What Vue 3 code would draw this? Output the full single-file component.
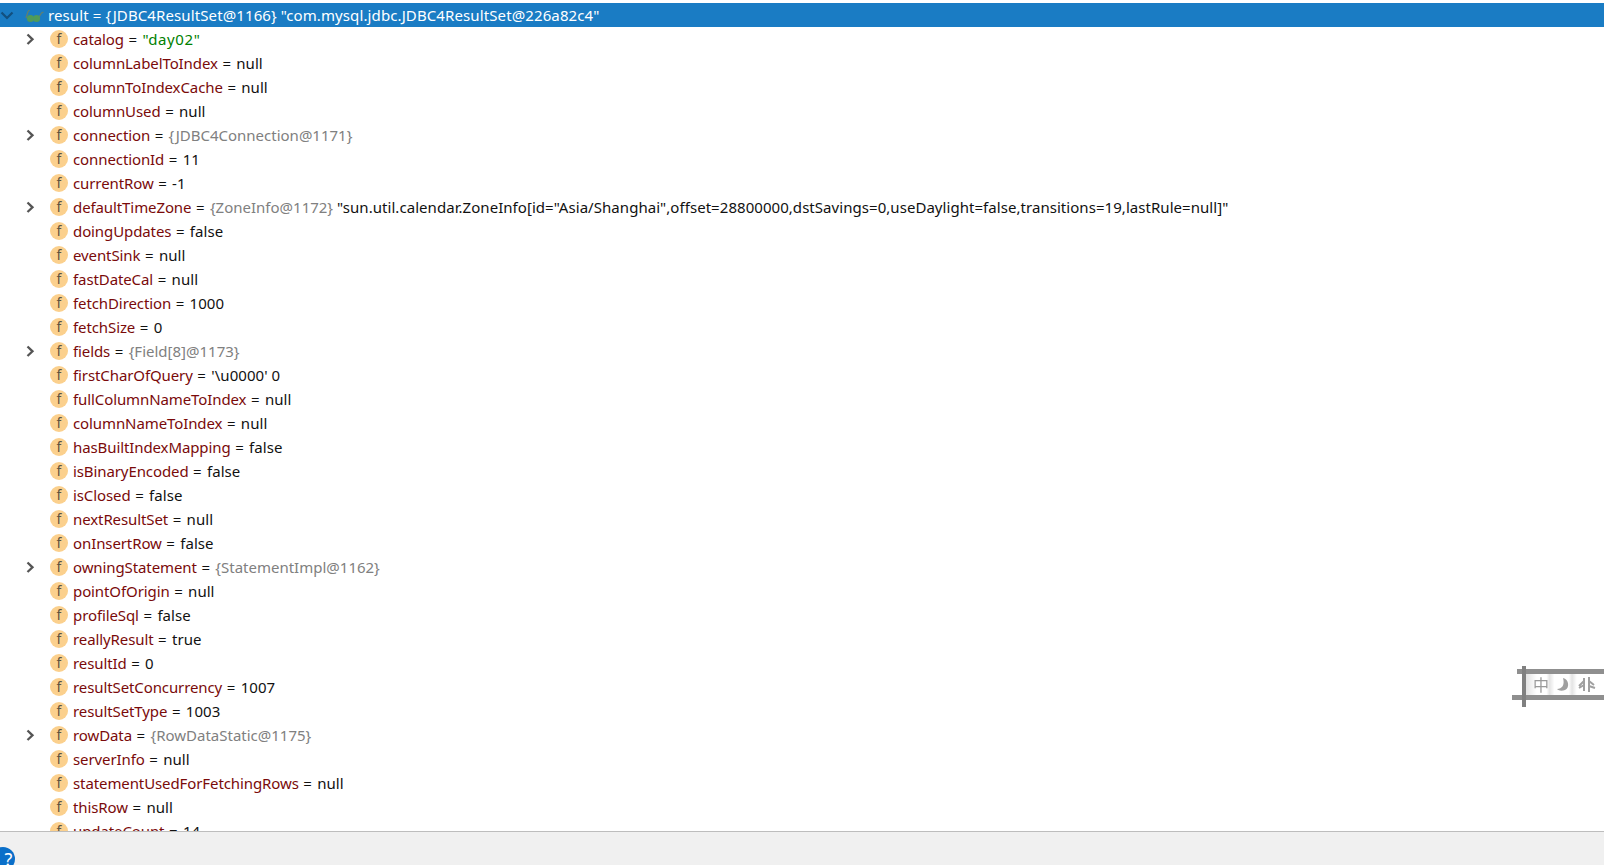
<script setup>
const rows = [
  { n: 'catalog', s: '"day02"', x: 1 },
  { n: 'columnLabelToIndex', v: 'null' },
  { n: 'columnToIndexCache', v: 'null' },
  { n: 'columnUsed', v: 'null' },
  { n: 'connection', r: '{JDBC4Connection@1171}', x: 1 },
  { n: 'connectionId', v: '11' },
  { n: 'currentRow', v: '-1' },
  { n: 'defaultTimeZone', r: '{ZoneInfo@1172}', v: '"sun.util.calendar.ZoneInfo[id="Asia/Shanghai",offset=28800000,dstSavings=0,useDaylight=false,transitions=19,lastRule=null]"', x: 1 },
  { n: 'doingUpdates', v: 'false' },
  { n: 'eventSink', v: 'null' },
  { n: 'fastDateCal', v: 'null' },
  { n: 'fetchDirection', v: '1000' },
  { n: 'fetchSize', v: '0' },
  { n: 'fields', r: '{Field[8]@1173}', x: 1 },
  { n: 'firstCharOfQuery', v: "'\\u0000' 0" },
  { n: 'fullColumnNameToIndex', v: 'null' },
  { n: 'columnNameToIndex', v: 'null' },
  { n: 'hasBuiltIndexMapping', v: 'false' },
  { n: 'isBinaryEncoded', v: 'false' },
  { n: 'isClosed', v: 'false' },
  { n: 'nextResultSet', v: 'null' },
  { n: 'onInsertRow', v: 'false' },
  { n: 'owningStatement', r: '{StatementImpl@1162}', x: 1 },
  { n: 'pointOfOrigin', v: 'null' },
  { n: 'profileSql', v: 'false' },
  { n: 'reallyResult', v: 'true' },
  { n: 'resultId', v: '0' },
  { n: 'resultSetConcurrency', v: '1007' },
  { n: 'resultSetType', v: '1003' },
  { n: 'rowData', r: '{RowDataStatic@1175}', x: 1 },
  { n: 'serverInfo', v: 'null' },
  { n: 'statementUsedForFetchingRows', v: 'null' },
  { n: 'thisRow', v: 'null' },
  { n: 'updateCount', v: '14' },
]
</script>

<template>
  <div class="page">
    <div class="tree">
      <div class="row selected">
        <svg class="down" width="14" height="14" viewBox="0 0 14 14">
          <path d="M1.5 4.5 L7 10 L12.5 4.5" fill="none" stroke="#12507f" stroke-width="2.2" />
        </svg>
        <svg class="glasses" width="20" height="18" viewBox="0 0 20 18">
          <path d="M2 12 L4 5.5 L5.5 4 M15 11 L17.5 7 L19.5 6" fill="none" stroke="#62806f" stroke-width="1.3" />
          <circle cx="6.5" cy="12.5" r="3.6" fill="#4f9a5a" />
          <circle cx="12.5" cy="12.5" r="3.6" fill="#4f9a5a" />
        </svg>
        <span class="title">result = {JDBC4ResultSet@1166} "com.mysql.jdbc.JDBC4ResultSet@226a82c4"</span>
      </div>
      <div v-for="row in rows" :key="row.n" class="row child">
        <span class="arrow">
          <svg v-if="row.x" width="12" height="14" viewBox="0 0 12 14">
            <path d="M3.5 2.5 L8.5 7.3 L3.5 12" fill="none" stroke="#555" stroke-width="2.3" />
          </svg>
        </span>
        <span class="field">f</span>
        <span class="text">
          <span class="name">{{ row.n }}</span>
          <span class="eq">{{ ' = ' }}</span>
          <span v-if="row.s" class="str">{{ row.s }}</span>
          <span v-if="row.r" class="ref">{{ row.r }}</span>
          <span v-if="row.v" :class="{ after: row.r }">{{ row.v }}</span>
        </span>
      </div>
    </div>
    <div class="status">
      <span class="help">?</span>
    </div>
    <div class="ime">
      <div class="band top"></div>
      <div class="band bottom"></div>
      <div class="post"></div>
      <span class="zh">中</span>
      <svg class="glyph moon" width="18" height="18" viewBox="0 0 18 18">
        <path d="M8 2 C14 3 15 12 10 14 C7 15 4 15 2 13 C7 13 10 9 8 2 Z" fill="#a0a0a0" />
      </svg>
      <svg class="glyph mark" width="18" height="18" viewBox="0 0 18 18">
        <path d="M6 2 L6 15 M6 5 L1 10 M6 9 L1 12 M11 1 L11 16 M11 5 L16 9 M11 10 L17 12" fill="none" stroke="#a0a0a0" stroke-width="2" />
      </svg>
    </div>
  </div>
</template>

<style scoped>
.page {
  position: relative;
  width: 1604px;
  height: 865px;
  display: flex;
  flex-direction: column;
  background: #fff;
  overflow: hidden;
  font-family: "Noto Sans", "Noto Sans CJK SC", sans-serif;
  font-size: 15px;
  color: #111;
}
.tree {
  flex: 1;
  min-height: 0;
  overflow: hidden;
  padding-top: 3px;
}
.row {
  height: 24px;
  line-height: 24px;
  display: flex;
  align-items: center;
  white-space: pre;
}
.selected {
  background: #1a7cc4;
  color: #fff;
}
.title { letter-spacing: 0.11px; }
.down {
  flex: none;
}
.glasses {
  margin-left: 10px;
  margin-right: 4px;
  flex: none;
}
.child {
  padding-left: 24px;
}
.arrow {
  width: 26px;
  height: 14px;
  display: flex;
  justify-content: flex-start;
  flex: none;
}
.field {
  width: 18px;
  height: 18px;
  border-radius: 50%;
  background: #fbd08d;
  color: #5e5340;
  font-size: 14px;
  line-height: 18px;
  text-align: center;
  flex: none;
  margin-right: 5px;
}
.text { letter-spacing: 0.05px; }
.name { color: #7a0a0a; letter-spacing: -0.1px; }
.eq { letter-spacing: 0.7px; }
.str { color: #008000; letter-spacing: 0.6px; }
.ref { color: #808080; letter-spacing: 0; }
.after { margin-left: 4px; }
.status {
  position: relative;
  height: 34px;
  flex: none;
  background: #f0f0f0;
  border-top: 1px solid #bdbdbd;
  box-sizing: border-box;
}
.help {
  position: absolute;
  left: -9px;
  top: 15px;
  width: 24px;
  height: 24px;
  border-radius: 50%;
  background: #0a6fc9;
  color: #fff;
  font-size: 18px;
  line-height: 24px;
  text-align: center;
  text-indent: 11px;
}
.ime {
  position: absolute;
  left: 1512px;
  top: 665px;
  width: 92px;
  height: 44px;
  filter: blur(0.7px);
}
.ime::before {
  content: "";
  position: absolute;
  left: 12px;
  right: 0;
  top: 8px;
  height: 23px;
  background: linear-gradient(90deg, #ddd, #fff 16%, #fff 28%, #e4e4e4 32%, #fff 38%, #fff 56%, #e4e4e4 60%, #fff 66%);
}
.band {
  position: absolute;
  right: 0;
  height: 5px;
  background: #8f8f8f;
}
.band.top { top: 4px; left: 5px; }
.band.bottom { top: 30px; left: 0; }
.post {
  position: absolute;
  left: 10px;
  top: 1px;
  width: 4px;
  height: 41px;
  background: #808080;
}
.zh {
  position: absolute;
  left: 21px;
  top: 8px;
  font-size: 16px;
  line-height: 24px;
  color: #9a9a9a;
}
.glyph {
  position: absolute;
  top: 11px;
}
.moon { left: 43px; }
.mark { left: 66px; }
</style>
